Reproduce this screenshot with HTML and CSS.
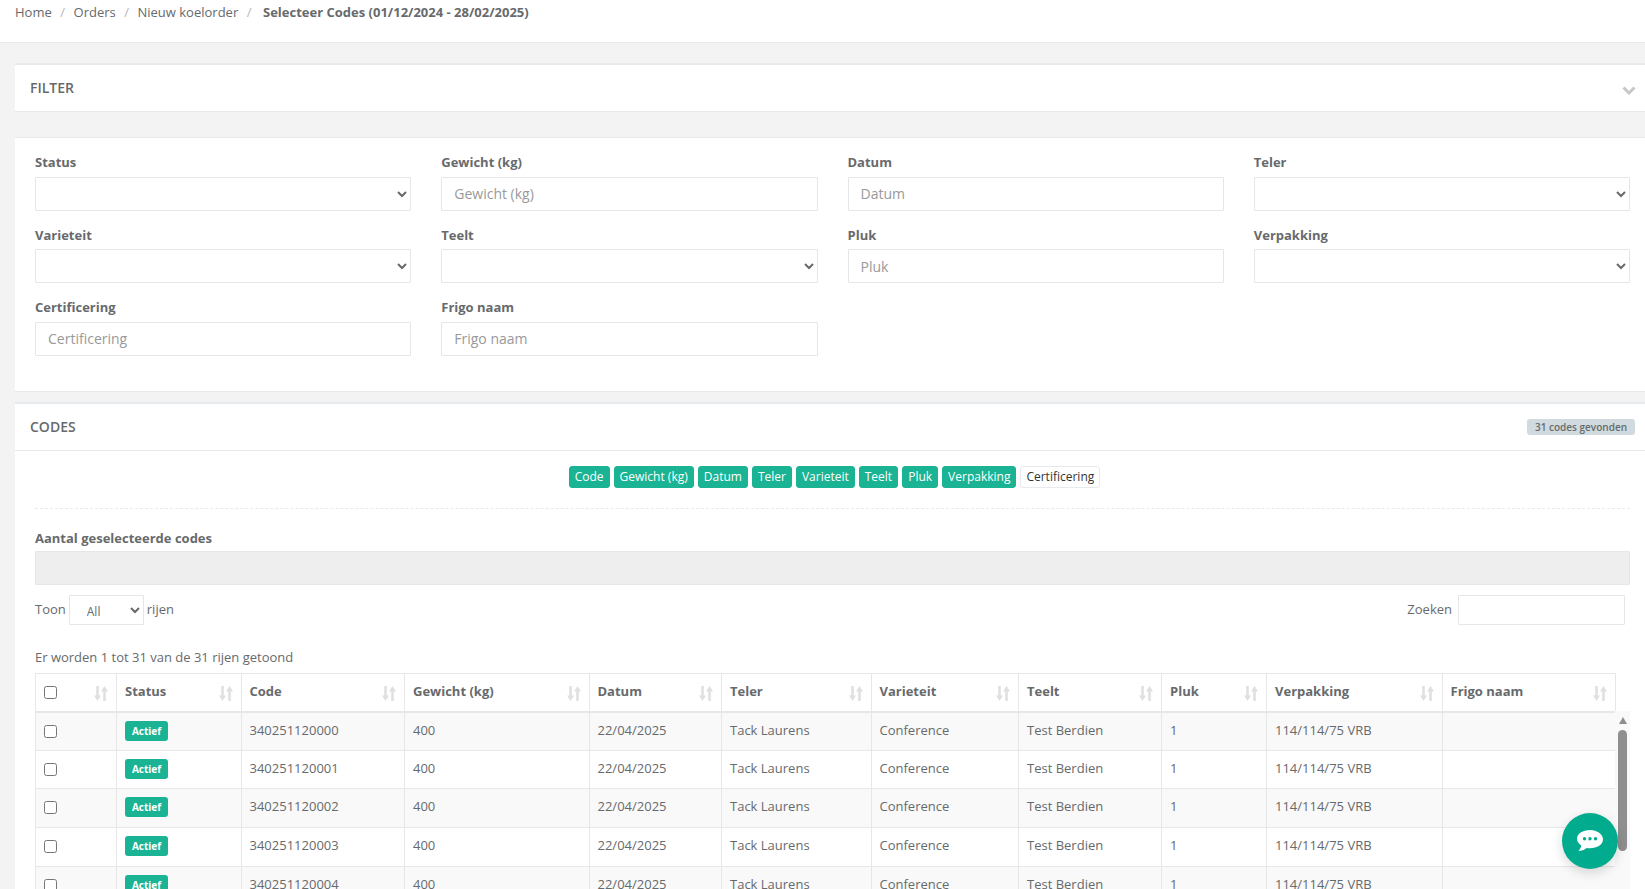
FILE: index.html
```html
<!DOCTYPE html>
<html lang="nl">
<head>
<meta charset="utf-8">
<title>Selecteer Codes</title>
<link rel="stylesheet" href="styles.css">
</head>
<body>
<svg class="defs" width="0" height="0" aria-hidden="true">
  <symbol id="sort" viewBox="0 0 14 15">
    <path d="M2.200 0h2.600v9.500H7L3.500 15 0 9.500h2.200zM9.200 15h2.600V5.500H14L10.500 0 7 5.500h2.200z"/>
  </symbol>
</svg>
<header class="topbar">
  <nav class="crumbs">
    <a>Home</a><span class="sep">/</span><a>Orders</a><span class="sep">/</span><a>Nieuw koelorder</a><span class="sep">/</span><strong>Selecteer Codes (01/12/2024 - 28/02/2025)</strong>
  </nav>
</header>
<main class="content">
  <section class="panel filter-panel">
    <div class="panel-head">
      <h5>FILTER</h5>
      <svg class="chevron" viewBox="0 0 14 9" aria-hidden="true"><path d="M1.500 1.500 7 7l5.500-5.500" fill="none" stroke="currentColor" stroke-width="3"/></svg>
    </div>
  </section>
  <section class="panel form-panel">
    <div class="form-grid">
      <div class="field"><label>Status</label><select class="control"><option></option></select></div>
      <div class="field"><label>Gewicht (kg)</label><input class="control" placeholder="Gewicht (kg)"></div>
      <div class="field"><label>Datum</label><input class="control" placeholder="Datum"></div>
      <div class="field"><label>Teler</label><select class="control"><option></option></select></div>
      <div class="field"><label>Varieteit</label><select class="control"><option></option></select></div>
      <div class="field"><label>Teelt</label><select class="control"><option></option></select></div>
      <div class="field"><label>Pluk</label><input class="control" placeholder="Pluk"></div>
      <div class="field"><label>Verpakking</label><select class="control"><option></option></select></div>
      <div class="field"><label>Certificering</label><input class="control" placeholder="Certificering"></div>
      <div class="field"><label>Frigo naam</label><input class="control" placeholder="Frigo naam"></div>
    </div>
  </section>
  <section class="panel codes-panel">
    <div class="panel-head">
      <h5>CODES</h5>
      <span class="count">31 codes gevonden</span>
    </div>
    <div class="codes-body">
      <div class="tags">
        <a class="tag on">Code</a><a class="tag on">Gewicht (kg)</a><a class="tag on">Datum</a><a class="tag on">Teler</a><a class="tag on">Varieteit</a><a class="tag on">Teelt</a><a class="tag on">Pluk</a><a class="tag on">Verpakking</a><a class="tag">Certificering</a>
      </div>
      <div class="selected">
        <label>Aantal geselecteerde codes</label>
        <input class="control readonly" disabled>
      </div>
      <div class="tools">
        <div class="tool"><span class="tool-text">Toon</span><select class="small len"><option>All</option></select><span class="tool-text">rijen</span></div>
        <div class="tool"><span class="tool-text">Zoeken</span><input class="small search"></div>
      </div>
      <p class="info">Er worden 1 tot 31 van de 31 rijen getoond</p>
      <div class="table-wrap">
        <table>
          <colgroup>
            <col class="c1"><col class="c2"><col class="c3"><col class="c4"><col class="c5"><col class="c6"><col class="c7"><col class="c8"><col class="c9"><col class="c10"><col class="c11">
          </colgroup>
          <thead>
            <tr>
              <th><input type="checkbox" class="check"><svg class="sort"><use href="#sort"/></svg></th>
              <th>Status<svg class="sort"><use href="#sort"/></svg></th>
              <th>Code<svg class="sort"><use href="#sort"/></svg></th>
              <th>Gewicht (kg)<svg class="sort"><use href="#sort"/></svg></th>
              <th>Datum<svg class="sort"><use href="#sort"/></svg></th>
              <th>Teler<svg class="sort"><use href="#sort"/></svg></th>
              <th>Varieteit<svg class="sort"><use href="#sort"/></svg></th>
              <th>Teelt<svg class="sort"><use href="#sort"/></svg></th>
              <th>Pluk<svg class="sort"><use href="#sort"/></svg></th>
              <th>Verpakking<svg class="sort"><use href="#sort"/></svg></th>
              <th>Frigo naam<svg class="sort"><use href="#sort"/></svg></th>
            </tr>
          </thead>
          <tbody>
            <tr><td><input type="checkbox" class="check"></td><td><span class="status">Actief</span></td><td>340251120000</td><td>400</td><td>22/04/2025</td><td>Tack Laurens</td><td>Conference</td><td>Test Berdien</td><td>1</td><td>114/114/75 VRB</td><td></td></tr>
            <tr><td><input type="checkbox" class="check"></td><td><span class="status">Actief</span></td><td>340251120001</td><td>400</td><td>22/04/2025</td><td>Tack Laurens</td><td>Conference</td><td>Test Berdien</td><td>1</td><td>114/114/75 VRB</td><td></td></tr>
            <tr><td><input type="checkbox" class="check"></td><td><span class="status">Actief</span></td><td>340251120002</td><td>400</td><td>22/04/2025</td><td>Tack Laurens</td><td>Conference</td><td>Test Berdien</td><td>1</td><td>114/114/75 VRB</td><td></td></tr>
            <tr><td><input type="checkbox" class="check"></td><td><span class="status">Actief</span></td><td>340251120003</td><td>400</td><td>22/04/2025</td><td>Tack Laurens</td><td>Conference</td><td>Test Berdien</td><td>1</td><td>114/114/75 VRB</td><td></td></tr>
            <tr><td><input type="checkbox" class="check"></td><td><span class="status">Actief</span></td><td>340251120004</td><td>400</td><td>22/04/2025</td><td>Tack Laurens</td><td>Conference</td><td>Test Berdien</td><td>1</td><td>114/114/75 VRB</td><td></td></tr>
          </tbody>
        </table>
        <div class="scrollbar" aria-hidden="true">
          <span class="scroll-up"></span>
          <span class="scroll-thumb"></span>
        </div>
      </div>
    </div>
  </section>
</main>
<button class="chat" aria-label="Chat">
  <svg viewBox="0 0 26 22" aria-hidden="true">
    <path fill="#fff" d="M13 0C5.800 0 0 3.900 0 8.800c0 2.600 1.700 5 4.300 6.600-.4 2.200-1.600 4.400-3 5.600 3.100 0 6.300-1.300 8.300-3.100 1.100.2 2.300.3 3.400.3 7.200 0 13-3.900 13-8.800S20.200 0 13 0z"/>
    <circle cx="7.500" cy="8.800" r="1.700" fill="#00ab8e"/><circle cx="13" cy="8.800" r="1.700" fill="#00ab8e"/><circle cx="18.500" cy="8.800" r="1.700" fill="#00ab8e"/>
  </svg>
</button>
</body>
</html>
```
FILE: styles.css
```css
* { box-sizing: border-box; }
html, body { height: 889px; overflow: hidden; }
body {
  margin: 0;
  background: #f3f3f4;
  color: #676a6c;
  font: 13px/1.42857 "Open Sans", "Noto Sans", sans-serif;
}
.defs { position: absolute; }

.topbar {
  height: 43px;
  background: #fff;
  border-bottom: 1px solid #e7eaec;
  padding: 3px 15px 0;
}
.crumbs { display: flex; }
.sep { color: #b5b7b9; margin: 0 8.500px; }
.crumbs strong { margin-left: 3px; }

.content { padding: 20px 0 0 15px; }
.panel { background: #fff; }

.panel-head {
  height: 47px;
  border-bottom: 1px solid #e7eaec;
  padding: 0 10px 0 15px;
  display: flex;
  align-items: center;
  justify-content: space-between;
}
.panel-head h5 { margin: 0; font-size: 14px; font-weight: 600; }

.filter-panel { border-top: 2px solid #e7eaec; }
.chevron { width: 14px; height: 9px; color: #c8c8c8; margin: 5px -1px 0 0; }

.form-panel {
  margin-top: 25px;
  border-top: 1px solid #e7eaec;
  border-bottom: 1px solid #e7eaec;
  padding: 15px 15px 35.400px 20px;
}
.form-grid {
  display: grid;
  grid-template-columns: repeat(4, 1fr);
  gap: 15px 30px;
}
label { display: block; font-weight: 700; margin-bottom: 5px; }
.control {
  display: block;
  width: 100%;
  height: 34px;
  padding: 6px 12px;
  background: #fff;
  border: 1px solid #e5e6e7;
  border-radius: 1px;
  color: #676a6c;
  font: 14px "Open Sans", sans-serif;
}
select.control { padding: 6px 8px; }
.control::placeholder { color: #999; opacity: 1; }
.control.readonly { background: #eee; }

.codes-panel { margin-top: 10px; border-top: 2px solid #e7eaec; }
.count {
  background: #d1dade;
  border-radius: 3px;
  padding: 0 8px;
  height: 16px;
  font-size: 10px;
  font-weight: 600;
  line-height: 16px;
}
.codes-body { padding: 15px 15px 0 20px; }

.tags {
  display: flex;
  justify-content: center;
  gap: 4px;
  padding: 0 0 20px 4px;
  border-bottom: 1px dashed #e7eaec;
}
.tag {
  height: 22px;
  padding: 0 5px;
  border: 1px solid #e7eaec;
  border-radius: 3px;
  background: #fff;
  color: #333;
  font-size: 12px;
  line-height: 20px;
}
.tag.on { background: #1ab394; border-color: #1ab394; color: #fff; }

.selected { padding-top: 20px; }
.selected label { margin-bottom: 3px; }

.tools {
  display: flex;
  justify-content: space-between;
  align-items: center;
  margin-top: 10px;
  padding-right: 5px;
}
.tool { display: flex; align-items: center; gap: 3px; }
.tool-text { margin-bottom: 1px; }
.small {
  height: 30px;
  background: #fff;
  border: 1px solid #e5e6e7;
  border-radius: 1px;
  color: #676a6c;
  font: 12px "Open Sans", sans-serif;
}
.len { width: 75px; padding: 4px 0 0 13px; }
.search { width: 167px; margin-left: 3px; }

.info { margin: 23px 0 7px; }

.table-wrap { position: relative; width: 1595px; }
table {
  width: 1579.500px;
  table-layout: fixed;
  border-collapse: collapse;
  background: #fff;
}
.c1 { width: 81px; }
.c2 { width: 124.500px; }
.c3 { width: 163.500px; }
.c4 { width: 184.500px; }
.c5 { width: 132.500px; }
.c6 { width: 149.500px; }
.c7 { width: 147.500px; }
.c8 { width: 143px; }
.c9 { width: 105px; }
.c10 { width: 175.500px; }
.c11 { width: 173px; }

th, td {
  border: 1px solid #e7e7e7;
  padding: 0 8px;
  text-align: left;
  white-space: nowrap;
}
th { position: relative; height: 38px; border-bottom-width: 2px; font-weight: 700; padding-bottom: 2px; }
td { height: 39px; padding-top: 8px; vertical-align: top; }
tbody tr:nth-child(2) td { height: 38px; }
tbody tr:nth-child(odd) { background: #f9f9f9; }

.sort {
  position: absolute;
  right: 8px;
  top: 12px;
  width: 14px;
  height: 15px;
  fill: #e0e0e0;
}
.check { display: block; width: 13px; height: 13px; margin: 0; }
td .check { margin-top: 4px; }
th .check { margin-top: 2px; }
.status {
  display: block;
  width: 43px;
  height: 20px;
  border-radius: 3px;
  background: #1ab394;
  color: #fff;
  font-size: 10px;
  font-weight: 700;
  line-height: 20px;
  text-align: center;
}

.scrollbar {
  position: absolute;
  top: 38px;
  right: 0;
  bottom: -40px;
  width: 15px;
  background: #f9f9f9;
  display: flex;
  flex-direction: column;
  align-items: center;
}
.scroll-up {
  margin-top: 6px;
  width: 0;
  height: 0;
  border: 4.500px solid transparent;
  border-top: 0;
  border-bottom: 7px solid #8f8f8f;
}
.scroll-thumb {
  margin-top: 6px;
  width: 9px;
  height: 121px;
  border-radius: 5px;
  background: #8f8f8f;
}

.chat {
  position: fixed;
  left: 1562px;
  top: 813px;
  width: 56px;
  height: 56px;
  border: 0;
  border-radius: 50%;
  background: #00ab8e;
  box-shadow: 0 4px 12px rgba(0, 0, 0, .15);
  display: flex;
  align-items: center;
  justify-content: center;
  padding: 0;
}
.chat svg { width: 26px; height: 22px; }
```
